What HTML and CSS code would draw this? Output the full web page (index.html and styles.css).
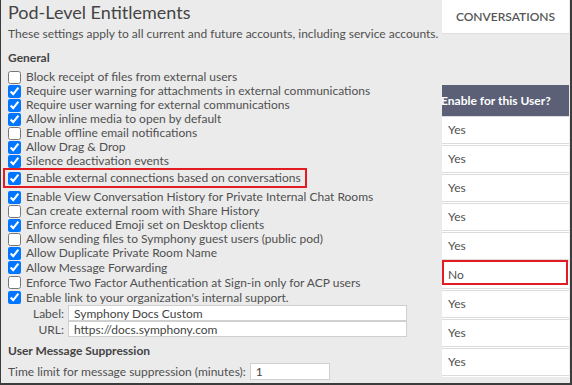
FILE: index.html
```html
<!DOCTYPE html>
<html lang="en">
<head>
    <meta charset="UTF-8">
    <meta name="viewport" content="width=device-width, initial-scale=1.0">
    <title>Pod-Level Entitlements</title>
    <link rel="stylesheet" href="styles.css">
</head>
<body>
    <div class="page">
        <div class="main">
            <h1>Pod-Level Entitlements</h1>
            <p class="intro">These settings apply to all current and future accounts, including service accounts.</p>

            <h2>General</h2>
            <div class="options">
                <label class="option"><input type="checkbox"> Block receipt of files from external users</label>
                <label class="option"><input type="checkbox" checked> Require user warning for attachments in external communications</label>
                <label class="option"><input type="checkbox" checked> Require user warning for external communications</label>
                <label class="option"><input type="checkbox" checked> Allow inline media to open by default</label>
                <label class="option"><input type="checkbox"> Enable offline email notifications</label>
                <label class="option"><input type="checkbox" checked> Allow Drag &amp; Drop</label>
                <label class="option"><input type="checkbox" checked> Silence deactivation events</label>
                <label class="option highlight"><input type="checkbox" checked> Enable external connections based on conversations</label>
                <label class="option"><input type="checkbox" checked> Enable View Conversation History for Private Internal Chat Rooms</label>
                <label class="option"><input type="checkbox"> Can create external room with Share History</label>
                <label class="option"><input type="checkbox" checked> Enforce reduced Emoji set on Desktop clients</label>
                <label class="option"><input type="checkbox"> Allow sending files to Symphony guest users (public pod)</label>
                <label class="option"><input type="checkbox" checked> Allow Duplicate Private Room Name</label>
                <label class="option wide"><input type="checkbox" checked> Allow Message Forwarding</label>
                <label class="option wide"><input type="checkbox"> Enforce Two Factor Authentication at Sign-in only for ACP users</label>
                <label class="option wide"><input type="checkbox" checked> Enable link to your organization's internal support.</label>
                <div class="field-row">
                    <span class="field-label">Label:</span>
                    <input class="text-input" type="text" value="Symphony Docs Custom">
                </div>
                <div class="field-row">
                    <span class="field-label">URL:</span>
                    <input class="text-input" type="text" value="https://docs.symphony.com">
                </div>
            </div>

            <h2 class="section">User Message Suppression</h2>
            <div class="limit-row">
                <span>Time limit for message suppression (minutes):</span>
                <input class="text-input small" type="text" value="1">
            </div>
        </div>

        <div class="side">
            <div class="tab">CONVERSATIONS</div>
            <div class="col-head">Enable for this User?</div>
            <div class="cells">
                <div class="cell">Yes</div>
                <div class="cell">Yes</div>
                <div class="cell">Yes</div>
                <div class="cell">Yes</div>
                <div class="cell">Yes</div>
                <div class="cell flagged">No</div>
                <div class="cell">Yes</div>
                <div class="cell">Yes</div>
                <div class="cell">Yes</div>
            </div>
        </div>
    </div>
</body>
</html>
```

FILE: styles.css
```css
body {
    margin: 0;
    font-family: Lato, 'Liberation Sans', sans-serif;
    font-size: 12px;
    color: #505050;
}
.page {
    width: 572px;
    height: 385px;
    box-sizing: border-box;
    display: flex;
    background: #ebebeb;
    border-left: 1px solid #3c3c3c;
    border-right: 2px solid #3c3c3c;
    border-bottom: 2px solid #3c3c3c;
    overflow: hidden;
}
.main {
    width: 434px;
    padding-left: 7px;
    flex-shrink: 0;
}
h1 {
    margin: 0;
    font-size: 18px;
    font-weight: normal;
    line-height: 24px;
    color: #444;
}
.intro {
    margin: 2px 0 0;
    line-height: 16px;
    white-space: nowrap;
}
h2 {
    margin: 8px 0 4px;
    font-size: 12px;
    line-height: 16px;
    color: #444;
}
.options {
    display: flex;
    flex-direction: column;
}
.option {
    display: flex;
    align-items: center;
    gap: 5px;
    height: 14px;
    line-height: 14px;
    white-space: nowrap;
}
.option input {
    width: 13px;
    height: 13px;
    margin: 0;
    flex-shrink: 0;
}
.option.wide {
    height: 15px;
}
.highlight {
    width: fit-content;
    height: 16px;
    margin: 0 0 2px -5px;
    padding: 0 4px 0 3px;
    border: 2px solid #e31b23;
}
.field-row {
    display: flex;
    align-items: center;
    gap: 4px;
    height: 16px;
}
.field-label {
    width: 37px;
    margin-left: 19px;
    text-align: right;
}
.text-input {
    width: 339px;
    height: 16px;
    box-sizing: border-box;
    padding: 0 5px;
    border: 1px solid #d0d0d0;
    background: white;
    font-family: inherit;
    font-size: 12px;
    color: #444;
    outline: none;
}
.text-input.small {
    width: 80px;
    height: 17px;
}
.section {
    margin: 6px 0 4px;
}
.limit-row {
    display: flex;
    align-items: center;
    gap: 4px;
}

.side {
    width: 127px;
    display: flex;
    flex-direction: column;
}
.tab {
    height: 33px;
    line-height: 33px;
    background: white;
    border-bottom: 1px solid #dedede;
    text-align: center;
    font-size: 12px;
    font-weight: 600;
    color: #555;
}
.col-head {
    margin-top: 51px;
    height: 31px;
    line-height: 31px;
    background: #5c6077;
    color: white;
    font-weight: bold;
    white-space: nowrap;
    text-indent: -1px;
}
.cells {
    background: white;
}
.cell {
    position: relative;
    height: 26px;
    line-height: 26px;
    padding-left: 6px;
    border-top: 1px solid #dcdcdc;
    border-bottom: 1px solid #dcdcdc;
    margin-bottom: 1px;
}
.flagged::after {
    content: '';
    position: absolute;
    top: -2px;
    left: 0;
    right: 1px;
    height: 21px;
    border: 2px solid #e31b23;
}
```
